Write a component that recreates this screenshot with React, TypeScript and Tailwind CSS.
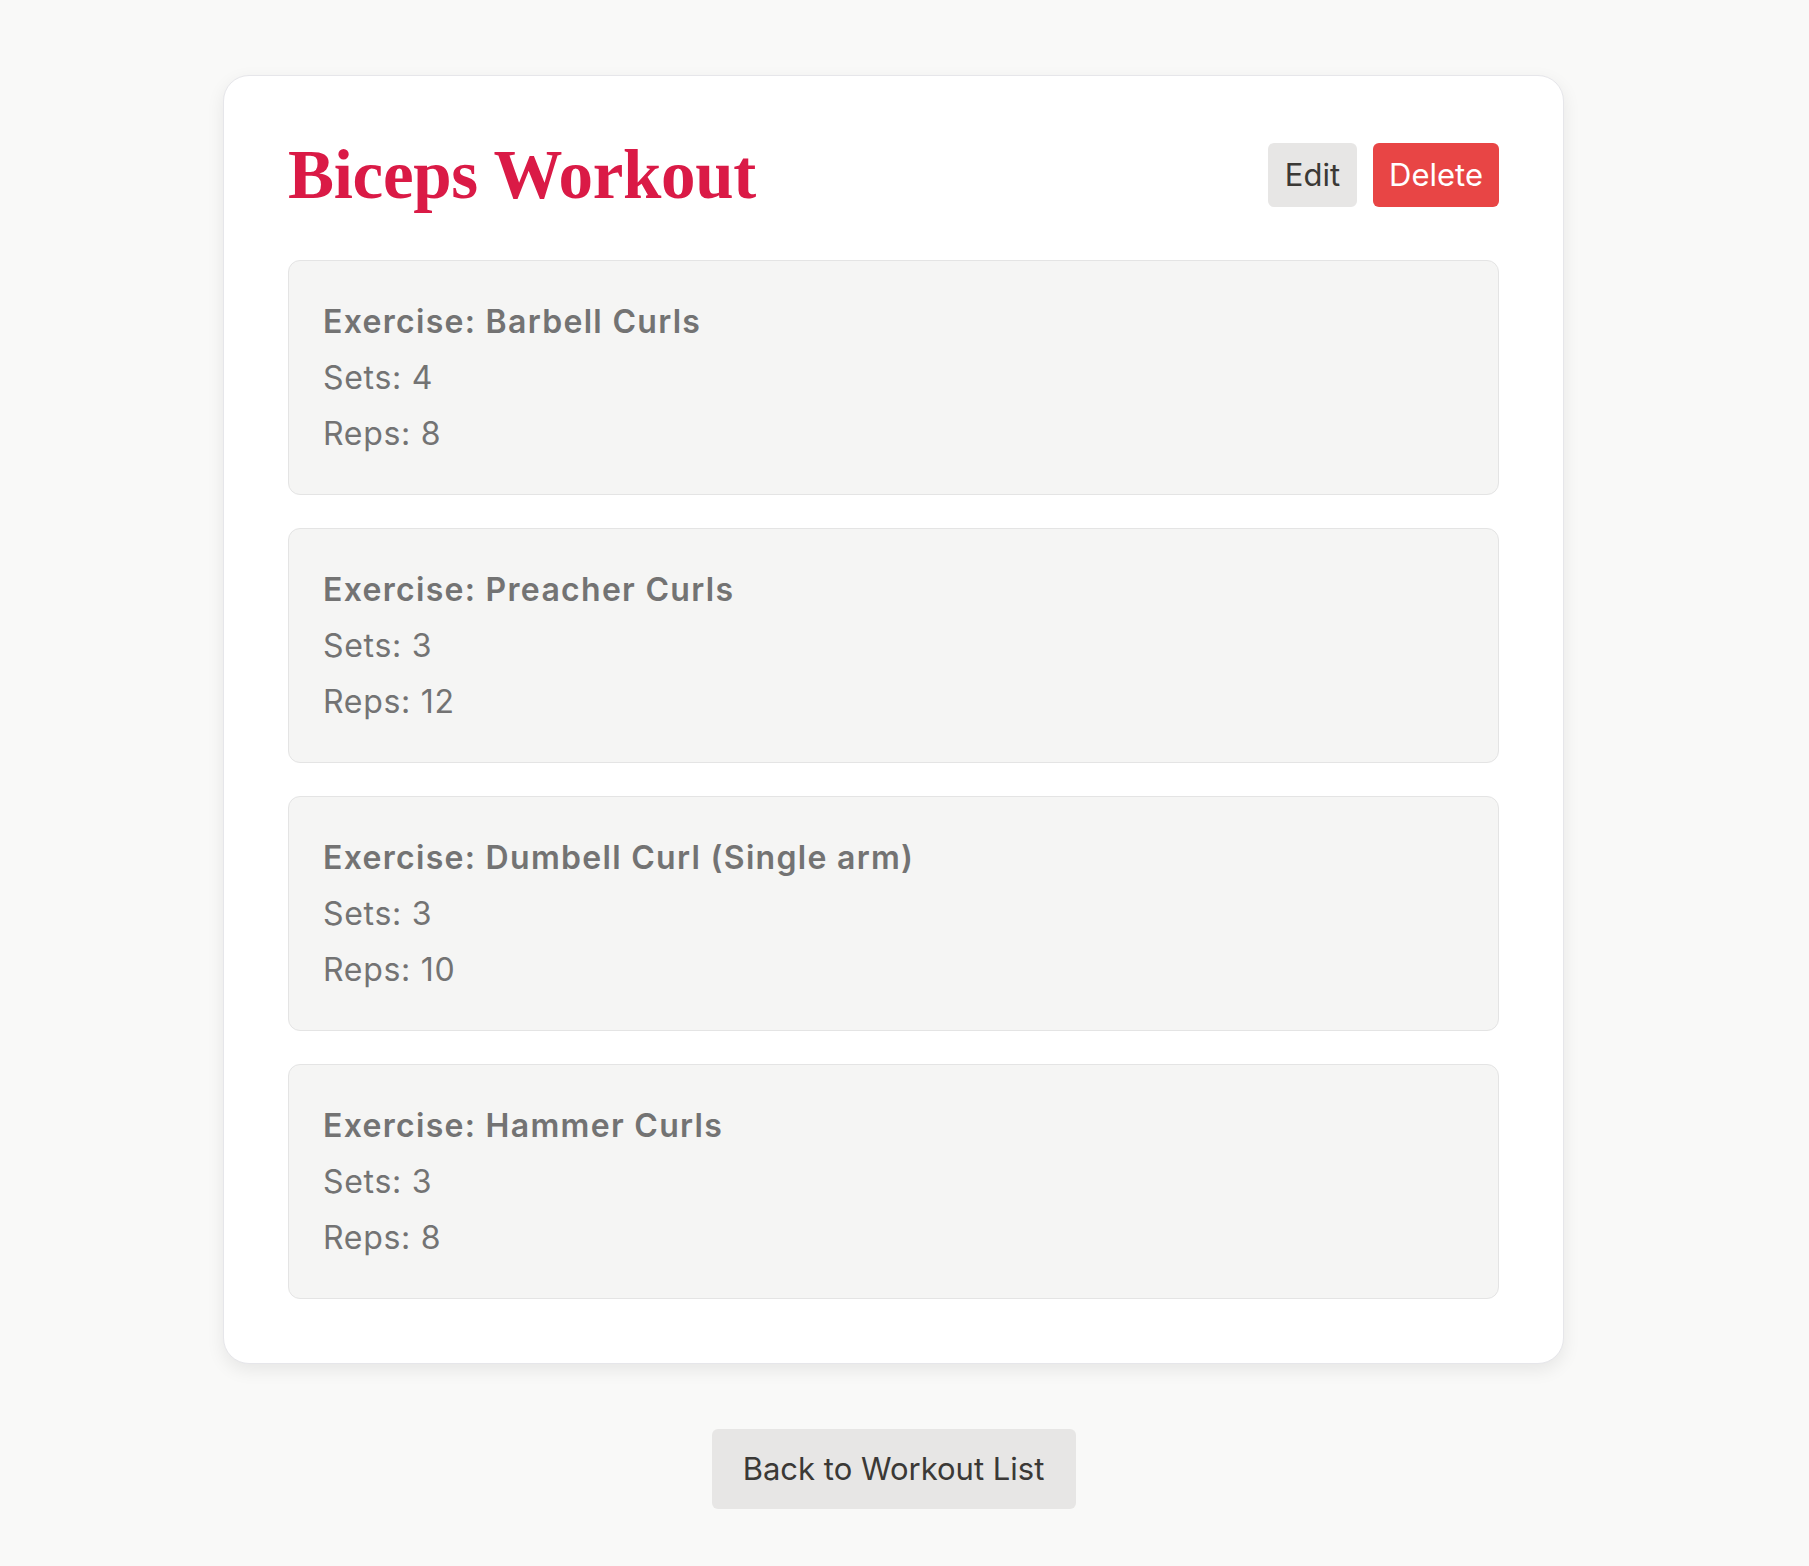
import React from 'react'

type Exercise = {
  name: string
  sets: number
  reps: number
}

const EXERCISES: Exercise[] = [
  { name: 'Barbell Curls', sets: 4, reps: 8 },
  { name: 'Preacher Curls', sets: 3, reps: 12 },
  { name: 'Dumbell Curl (Single arm)', sets: 3, reps: 10 },
  { name: 'Hammer Curls', sets: 3, reps: 8 },
]

export default function App() {
  return (
    <main className="min-h-screen bg-[#f9f9f8] pt-[75px] pb-[60px] pr-[22px] font-['Inter','Noto_Sans',sans-serif]">
      <div className="mx-auto w-[1341px] rounded-[26px] border border-[#e6e6ea] bg-white p-16 shadow-[0_6px_18px_rgba(0,0,0,0.08)]">
        {/* Header */}
        <div className="mb-[50px] flex h-[70px] items-center justify-between">
          <h1 className="font-['Liberation_Serif','Times_New_Roman',serif] text-[69px] font-bold leading-none tracking-[-0.3px] text-[#da1a46]">
            Biceps Workout
          </h1>
          <div className="flex items-center gap-4">
            <button className="h-16 rounded-md bg-[#e7e6e5] px-[17px] text-[31px] text-[#3b3936]">
              Edit
            </button>
            <button className="h-16 rounded-md bg-[#e84545] px-[16px] text-[31px] text-white">
              Delete
            </button>
          </div>
        </div>

        {/* Exercises */}
        <div className="flex flex-col gap-[33px]">
          {EXERCISES.map((ex) => (
            <div
              key={ex.name}
              className="rounded-xl border border-[#e4e4e4] bg-[#f5f5f4] pb-[32px] pl-[34px] pt-[33px] text-[32px] leading-[56px] tracking-[0.7px] text-[#737373]"
            >
              <p className="font-semibold tracking-[1.3px]">Exercise: {ex.name}</p>
              <p>Sets: {ex.sets}</p>
              <p>Reps: {ex.reps}</p>
            </div>
          ))}
        </div>
      </div>

      {/* Back */}
      <div className="mt-[65px] flex justify-center">
        <button className="h-20 w-[364px] rounded-md bg-[#e7e6e5] text-[31px] text-[#3b3936]">
          Back to Workout List
        </button>
      </div>
    </main>
  )
}
